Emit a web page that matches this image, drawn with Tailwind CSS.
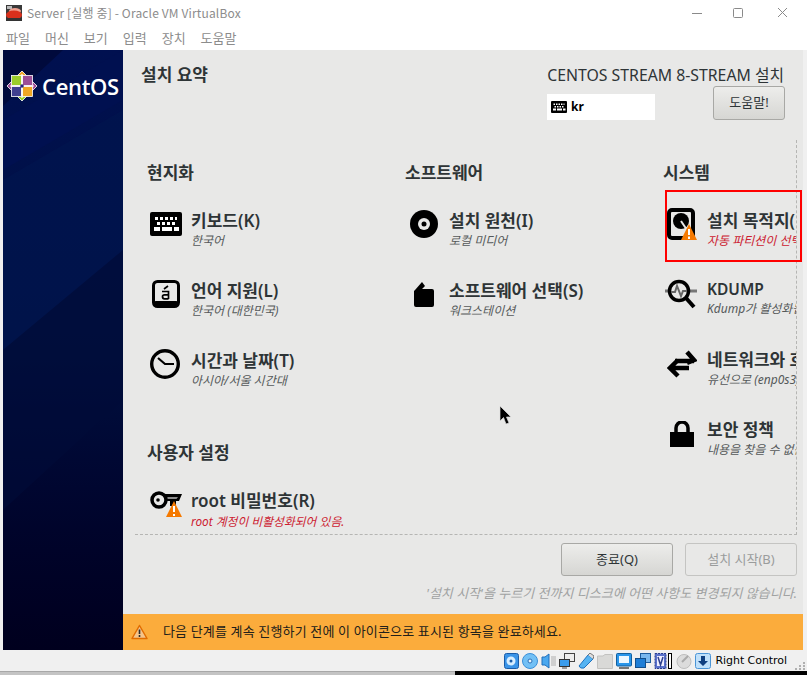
<!DOCTYPE html>
<html>
  <head>
    <meta charset="UTF-8" />
    <script src="https://cdn.jsdelivr.net/npm/@tailwindcss/browser@4"></script>
  </head>
  <body class="bg-white">
    <div class="relative w-[807px] h-[675px] overflow-hidden flex flex-col bg-[#f0f0f0] font-['Noto_Sans','Noto_Sans_CJK_KR',sans-serif]">
      <!-- title bar -->
      <div class="h-[25px] bg-white flex items-center pl-[6px] shrink-0">
        <svg class="w-[16px] h-[16px]" viewBox="0 0 16 16">
          <rect width="16" height="16" fill="#3a3a3a" />
          <rect x="1" y="1" width="5" height="3" fill="#bbb" />
          <ellipse cx="9" cy="6" rx="6" ry="3" fill="#f0a090" />
          <ellipse cx="8" cy="10" rx="8" ry="4.5" fill="#d8301c" />
          <rect x="0" y="13" width="16" height="3" fill="#333" />
        </svg>
        <span class="ml-[5px] text-[12px] leading-none tracking-[0.15px] text-[#8c8c8c] font-['Noto_Sans_CJK_KR',sans-serif]">Server [실행 중] - Oracle VM VirtualBox</span>
        <svg class="ml-auto mr-[15px] w-[100px] h-[14px]" viewBox="0 0 100 14" fill="none" stroke="#8a8a8a">
          <path d="M0 7.5H10" />
          <rect x="41.5" y="2.5" width="9" height="9" rx="1" />
          <path d="M86 2L95 11M95 2L86 11" />
        </svg>
      </div>
      <!-- menu -->
      <div class="h-[25px] bg-white flex items-center pl-[6px] gap-[15px] text-[13px] text-[#8c8c8c] shrink-0 font-['Noto_Sans_CJK_KR',sans-serif]">
        <span>파일</span><span>머신</span><span>보기</span><span>입력</span><span>장치</span><span>도움말</span>
      </div>
      <!-- guest screen -->
      <div class="h-[600px] ml-[3px] mr-[4px] flex shrink-0">
        <div class="relative w-[120px] bg-gradient-to-b from-[#001050] via-[#001040] to-[#00001e] overflow-hidden">
          <svg class="absolute inset-0 w-[120px] h-[600px]" viewBox="0 0 120 600">
            <polygon points="0,0 60,0 0,56" fill="#000a3c" />
            <polygon points="120,0 120,50 0,120 0,70" fill="#001050" />
            <polygon points="0,130 120,60 120,200 0,300" fill="#00164f" opacity="0.7" />
            <polygon points="0,300 120,200 120,350 0,460" fill="#000c38" opacity="0.6" />
          </svg>
          <div class="relative flex items-center pl-[3px] pt-[20px] gap-[4px]">
            <svg class="w-[32px] h-[32px] shrink-0" viewBox="0 0 32 32">
              <g stroke="#fff" stroke-width="0.8">
                <polygon points="16,1 20.5,5.5 20.5,11.5 16,16 11.500,11.500 11.500,5.500" fill="#efa724" />
                <polygon points="31,16 26.500,20.500 20.500,20.500 16,16 20.500,11.500 26.500,11.500" fill="#9c4f96" />
                <polygon points="16,31 11.500,26.500 11.500,20.500 16,16 20.500,20.500 20.500,26.500" fill="#9ccd2a" />
                <polygon points="1,16 5.500,11.500 11.500,11.500 16,16 11.500,20.500 5.500,20.500" fill="#9c4f96" />
                <rect x="5.500" y="5.500" width="10" height="10" fill="#9ccd2a" />
                <rect x="16.500" y="5.500" width="10" height="10" fill="#9c4f96" />
                <rect x="16.500" y="16.500" width="10" height="10" fill="#efa724" />
                <rect x="5.500" y="16.500" width="10" height="10" fill="#3f3f8f" />
              </g>
              <path d="M16 4V28M4 16H28" stroke="#fff" stroke-width="1.200" />
              <circle cx="16" cy="16" r="1.800" fill="#262577" />
            </svg>
            <span class="text-[22px] leading-none font-semibold text-white font-['Open_Sans',sans-serif] tracking-[-0.3px]">CentOS</span>
          </div>
        </div>
        <div class="w-[680px] flex flex-col bg-[#e8e8e7] text-[#2e3436]">
          <!-- header -->
          <div class="h-[90px] flex justify-between shrink-0">
            <h1 class="pl-[18px] pt-[15px] text-[17px] leading-5 font-bold">설치 요약</h1>
            <div class="flex flex-col items-end pr-[18px] pt-[15px]">
              <div class="pr-[1px] text-[15.800px] leading-5 whitespace-nowrap">CENTOS STREAM 8-STREAM 설치</div>
              <div class="w-[238px] flex justify-between">
                <div class="mt-[9px] w-[108px] h-[26px] bg-white flex items-center pl-[4px] gap-[4px]">
                  <svg class="w-[16px] h-[12px]" viewBox="0 0 32 24"><rect width="32" height="24" rx="2" fill="#000" /><path d="M5 5h3v3H5zM10 5h3v3h-3zM15 5h3v3h-3zM20 5h3v3h-3zM25 5h2v3h-2zM7 10h3v3H7zM12 10h3v3h-3zM17 10h3v3h-3zM22 10h3v3h-3zM4 15h6v4H4zM12 15h10v4H12zM24 15h5v4h-5z" fill="#fff" /></svg>
                  <span class="text-[12px] font-bold text-black">kr</span>
                </div>
                <div class="mt-[1px] w-[72px] h-[34px] rounded-[3px] border border-[#a8a8a5] bg-gradient-to-b from-[#ededeb] to-[#d6d6d3] flex items-center justify-center text-[13px]">도움말!</div>
              </div>
            </div>
          </div>
          <!-- spokes -->
          <div class="ml-[12px] w-[662px] h-[395px] shrink-0 border-r border-b border-dashed border-[#b5b5b3] overflow-hidden">
            <div class="grid grid-cols-[258px_258px_258px] pl-[12px] pt-[23px] w-[800px]">
              <div class="flex flex-col">
                <h2 class="text-[17px] leading-5 font-semibold h-[26px]">현지화</h2>
                <div class="h-[70px] flex items-center">
                  <svg class="w-[32px] h-[24px] ml-[3px] mr-[9px] shrink-0" viewBox="0 0 32 24"><rect width="32" height="24" rx="2" fill="#000" /><path d="M5 5h3v3H5zM10 5h3v3h-3zM15 5h3v3h-3zM20 5h3v3h-3zM25 5h2v3h-2zM7 10h3v3H7zM12 10h3v3h-3zM17 10h3v3h-3zM22 10h3v3h-3zM4 15h6v4H4zM12 15h10v4H12zM24 15h5v4h-5z" fill="#fff" /></svg>
                  <div class="pt-[12px]">
                    <div class="text-[17px] leading-[22px] font-semibold">키보드(K)</div>
                    <div class="text-[12px] leading-[18px] italic text-[#55595a]">한국어</div>
                  </div>
                </div>
                <div class="h-[70px] flex items-center">
                  <svg class="w-[28px] h-[28px] ml-[5px] mr-[11px] shrink-0" viewBox="0 0 28 28"><rect x="1.500" y="1.500" width="25" height="25" rx="4" fill="#e8e8e7" stroke="#000" stroke-width="3" /><rect x="1" y="21" width="26" height="6" rx="3" fill="#000" /><path d="M10 11.500h6.500v7.500M16.500 14.800h-4a2 2 0 0 0 0 4h4M12 9L16 6" fill="none" stroke="#000" stroke-width="1.700" /></svg>
                  <div class="pt-[12px]">
                    <div class="text-[17px] leading-[22px] font-semibold">언어 지원(L)</div>
                    <div class="text-[12px] leading-[18px] italic text-[#55595a]">한국어 (대한민국)</div>
                  </div>
                </div>
                <div class="h-[70px] flex items-center">
                  <svg class="w-[30px] h-[30px] ml-[3px] mr-[11px] shrink-0" viewBox="0 0 30 30" fill="none" stroke="#000"><circle cx="15" cy="15" r="13.300" stroke-width="3.400" /><path d="M8 9L15 15H24" stroke-width="2.200" /></svg>
                  <div class="pt-[12px]">
                    <div class="text-[17px] leading-[22px] font-semibold">시간과 날짜(T)</div>
                    <div class="text-[12px] leading-[18px] italic text-[#55595a]">아시아/서울 시간대</div>
                  </div>
                </div>
                <h2 class="mt-[44px] text-[17px] leading-5 font-semibold h-[26px]">사용자 설정</h2>
                <div class="h-[70px] flex items-center">
                  <svg class="w-[32px] h-[26px] ml-[3px] mr-[9px] shrink-0" viewBox="0 0 32 26">
                    <path d="M14 3H32L29 10H26V15H20V10H14" fill="#000" />
                    <path d="M17 6H28L26.500 8H17" fill="#8a8a8a" />
                    <circle cx="9" cy="9" r="7" fill="#e8e8e7" stroke="#000" stroke-width="3.500" />
                    <circle cx="8" cy="9" r="1.800" fill="#000" />
                    <polygon points="24,10 32,26 16,26" fill="#f57900" />
                    <path d="M24 15V21M24 23V25" stroke="#fff" stroke-width="2" />
                  </svg>
                  <div class="pt-[12px]">
                    <div class="text-[17px] leading-[22px] font-semibold">root 비밀번호(R)</div>
                    <div class="text-[11.800px] leading-[18px] italic text-[#cc2030]">root 계정이 비활성화되어 있음.</div>
                  </div>
                </div>
              </div>
              <div class="flex flex-col">
                <h2 class="text-[17px] leading-5 font-semibold h-[26px]">소프트웨어</h2>
                <div class="h-[70px] flex items-center">
                  <svg class="w-[28px] h-[28px] ml-[5px] mr-[11px] shrink-0" viewBox="0 0 28 28"><circle cx="14" cy="14" r="14" fill="#000" /><circle cx="14" cy="14" r="6" fill="#e8e8e7" /><circle cx="14" cy="14" r="2.500" fill="#000" /></svg>
                  <div class="pt-[12px]">
                    <div class="text-[17px] leading-[22px] font-semibold">설치 원천(I)</div>
                    <div class="text-[12px] leading-[18px] italic text-[#55595a]">로컬 미디어</div>
                  </div>
                </div>
                <div class="h-[70px] flex items-center">
                  <svg class="w-[22px] h-[26px] ml-[8px] mr-[14px] shrink-0" viewBox="0 0 22 26"><path d="M2 9L9 1L12 5L9 8H19A2 2 0 0 1 21 10V24A2 2 0 0 1 19 26H3A2 2 0 0 1 1 24V10Z" fill="#000" /></svg>
                  <div class="pt-[12px]">
                    <div class="text-[17px] leading-[22px] font-semibold">소프트웨어 선택(S)</div>
                    <div class="text-[12px] leading-[18px] italic text-[#55595a]">워크스테이션</div>
                  </div>
                </div>
              </div>
              <div class="flex flex-col">
                <h2 class="text-[17px] leading-5 font-semibold h-[26px]">시스템</h2>
                <div class="h-[70px] flex items-center">
                  <svg class="w-[30px] h-[32px] ml-[4px] mr-[10px] shrink-0" viewBox="0 0 30 32">
                    <rect x="2" y="2" width="24" height="28" rx="3" fill="#e8e8e7" stroke="#000" stroke-width="4" />
                    <circle cx="14" cy="13" r="8" fill="#000" />
                    <path d="M14 13L20 22" stroke="#e8e8e7" stroke-width="2" />
                    <polygon points="22,16 30,32 14,32" fill="#f57900" />
                    <path d="M22 21V27M22 28.500V31" stroke="#fff" stroke-width="2" />
                  </svg>
                  <div class="pt-[12px] whitespace-nowrap">
                    <div class="text-[17px] leading-[22px] font-semibold">설치 목적지(D)</div>
                    <div class="text-[12px] leading-[18px] italic text-[#cc2030]">자동 파티션이 선택됨</div>
                  </div>
                </div>
                <div class="h-[70px] flex items-center">
                  <svg class="w-[32px] h-[30px] ml-[2px] mr-[10px] shrink-0" viewBox="0 0 32 30" fill="none">
                    <path d="M0 12H32" stroke="#777" stroke-width="3" />
                    <circle cx="14" cy="12" r="9.500" fill="#e8e8e7" stroke="#000" stroke-width="3.500" />
                    <path d="M6 13L10 13L12 7L16 17L18 12H22" stroke="#666" stroke-width="2" />
                    <path d="M21 19L29 28" stroke="#000" stroke-width="4" />
                  </svg>
                  <div class="pt-[8px] whitespace-nowrap">
                    <div class="text-[15.500px] leading-[22px] font-semibold">KDUMP</div>
                    <div class="text-[12px] leading-[18px] italic text-[#55595a]">Kdump가 활성화됩니다</div>
                  </div>
                </div>
                <div class="h-[70px] flex items-center">
                  <svg class="w-[30px] h-[28px] ml-[4px] mr-[10px] shrink-0" viewBox="0 0 30 28" fill="none" stroke="#000" stroke-width="4.500"><path d="M8 11H27M20 2L27 10L20 13" /><path d="M22 18H4M11 10L3 18L11 26" /></svg>
                  <div class="pt-[10px] whitespace-nowrap">
                    <div class="text-[17px] leading-[22px] font-semibold">네트워크와 호스트 이름</div>
                    <div class="text-[12px] leading-[18px] italic text-[#55595a]">유선으로 (enp0s3) 연결됨</div>
                  </div>
                </div>
                <div class="h-[70px] flex items-center">
                  <svg class="w-[24px] h-[26px] ml-[7px] mr-[13px] shrink-0" viewBox="0 0 24 26"><path d="M6 12V7a6 6 0 0 1 12 0v5" fill="none" stroke="#000" stroke-width="3.500" /><rect y="11" width="24" height="15" fill="#000" /></svg>
                  <div class="pt-[10px] whitespace-nowrap">
                    <div class="text-[17px] leading-[22px] font-semibold">보안 정책</div>
                    <div class="text-[12px] leading-[18px] italic text-[#55595a]">내용을 찾을 수 없음</div>
                  </div>
                </div>
              </div>
            </div>
          </div>
          <!-- buttons -->
          <div class="h-[41px] flex justify-end items-end gap-[12px] pr-[6px] shrink-0">
            <div class="w-[112px] h-[33px] rounded-[3px] border border-[#a8a8a5] bg-gradient-to-b from-[#ededeb] to-[#d6d6d3] flex items-center justify-center text-[13px]">종료(Q)</div>
            <div class="w-[112px] h-[33px] rounded-[3px] border border-[#c4c4c2] bg-[#e8e8e7] flex items-center justify-center text-[13px] text-[#9a9c9c]">설치 시작(B)</div>
          </div>
          <div class="h-[38px] pt-[7px] pr-[6px] text-right text-[13px] leading-5 italic text-[#a0a2a2] shrink-0">'설치 시작'을 누르기 전까지 디스크에 어떤 사항도 변경되지 않습니다.</div>
          <!-- warning bar -->
          <div class="h-[36px] bg-[#fbac3c] flex items-center pl-[8px] gap-[15px] text-[13px] tracking-[0.15px] text-[#22201a] shrink-0">
            <svg class="w-[17px] h-[16px]" viewBox="0 0 17 16"><polygon points="8.500,1.500 16,14.500 1,14.500" fill="#f5c48a" stroke="#e06c00" stroke-width="1.500" stroke-linejoin="round" /><path d="M8.500 5.500V10M8.500 11V13" stroke="#2e2e2e" stroke-width="1.600" /></svg>
            <span>다음 단계를 계속 진행하기 전에 이 아이콘으로 표시된 항목을 완료하세요.</span>
          </div>
        </div>
      </div>
      <!-- vbox status bar -->
      <div class="h-[21px] flex items-center justify-end shrink-0 pr-[20px] gap-[3px]">
        <svg class="w-[15px] h-[16px]" viewBox="0 0 15 16"><rect x="0.500" y="0.500" width="14" height="15" rx="2" fill="#3a94e8" stroke="#1a5ca8" /><circle cx="7" cy="8" r="4.500" fill="#d8eeff" /><circle cx="7" cy="8" r="1.500" fill="#1a5ca8" /></svg>
        <svg class="w-[16px] h-[16px]" viewBox="0 0 16 16"><circle cx="8" cy="8" r="7.500" fill="#72c0f5" stroke="#3a8fd8" /><circle cx="8" cy="8" r="2" fill="#e8f6ff" stroke="#2a70b8" /></svg>
        <svg class="w-[15px] h-[16px]" viewBox="0 0 15 16"><path d="M1 4H4L8 1V15L4 12H1Z" fill="#4aa8ef" stroke="#1f6ebc" /><path d="M10 3H15V13H10Z" fill="#cfcfcf" /></svg>
        <svg class="w-[16px] h-[16px]" viewBox="0 0 16 16"><rect x="5.500" y="0.500" width="10" height="8" fill="#eee" stroke="#444" /><rect x="0.500" y="6.500" width="10" height="7" fill="#3a9cec" stroke="#333" /><path d="M3 15H8" stroke="#444" /></svg>
        <svg class="w-[16px] h-[16px]" viewBox="0 0 16 16"><path d="M1 13L10 2L15 6L6 15Q2 16 1 13Z" fill="#56b4f2" stroke="#1e72bf" /><path d="M10 2L12 0L16 3L15 6" fill="#ddd" stroke="#777" /></svg>
        <svg class="w-[16px] h-[16px]" viewBox="0 0 16 16"><path d="M0.500 3H6L8 1.500H15.500V15.500H0.500Z" fill="#d9d9d7" stroke="#c2c2c0" /></svg>
        <svg class="w-[16px] h-[16px]" viewBox="0 0 16 16"><rect x="0.500" y="0.500" width="15" height="12.500" rx="1" fill="#2a96ea" stroke="#125f9e" /><rect x="3" y="3" width="10" height="7" fill="#eef8ff" /><path d="M3 15H13" stroke="#777" stroke-width="2" /></svg>
        <svg class="w-[16px] h-[16px]" viewBox="0 0 16 16"><rect x="5.500" y="0.500" width="10" height="9" fill="#7ab8ee" stroke="#1e5c9c" /><rect x="0.500" y="5.500" width="10" height="9" fill="#1f7ed6" stroke="#134f8a" /></svg>
        <svg class="w-[13px] h-[16px]" viewBox="0 0 13 16"><rect x="1" y="0.500" width="11" height="15" fill="#5a72cc" stroke="#2c3f8e" stroke-dasharray="2 1" /><rect x="3" y="3" width="7" height="10" fill="#eef" /><path d="M4 4L6.500 12L9 4" fill="none" stroke="#2c3f8e" stroke-width="1.500" /></svg>
        <div class="w-[4px] h-[16px] border border-black -ml-[2px] bg-white"></div>
        <svg class="w-[16px] h-[16px] ml-[1px]" viewBox="0 0 16 16"><ellipse cx="8" cy="8.500" rx="7" ry="7" fill="#dcdcdc" stroke="#bdbdbd" /><path d="M6 9L12 3" stroke="#aaa" stroke-width="2" /></svg>
        <svg class="w-[16px] h-[16px]" viewBox="0 0 16 16"><rect x="0.500" y="0.500" width="15" height="15" rx="2" fill="#bfe0fa" stroke="#4a94d6" /><path d="M6 3H10V8H13L8 13L3 8H6Z" fill="#0f3f80" /></svg>
        <span class="ml-[1px] text-[11px] leading-none text-black font-['DejaVu_Sans',sans-serif] tracking-[-0.05px]">Right Control</span>
      </div>
      <!-- what shows below the window -->
      <div class="flex-1 flex">
        <div class="w-[455px] bg-[#c4c4c4] border-t border-[#a8a8a8]"></div>
        <div class="flex-1 bg-black"></div>
      </div>
      <!-- red annotation box, drawn over the page -->
      <div class="absolute left-[665px] top-[190px] w-[137px] h-[72px] border-2 border-[#ff0000]"></div>
      <!-- mouse pointer in the guest -->
      <svg class="absolute left-[499px] top-[405px] w-[13px] h-[21px]" viewBox="0 0 13 21"><path d="M1 1V16L4.500 12.500L7 19L10 18L7.500 12H12Z" fill="#000" stroke="#ddd" stroke-width="0.700" /></svg>
      <!-- resize grip -->
      <svg class="absolute left-[795px] top-[661px] w-[11px] h-[10px]" viewBox="0 0 11 10" fill="#b0b0b0"><rect x="8" y="1" width="2" height="2" /><rect x="4" y="4" width="2" height="2" /><rect x="8" y="4" width="2" height="2" /><rect x="0" y="7" width="2" height="2" /><rect x="4" y="7" width="2" height="2" /><rect x="8" y="7" width="2" height="2" /></svg>
    </div>
  </body>
</html>
